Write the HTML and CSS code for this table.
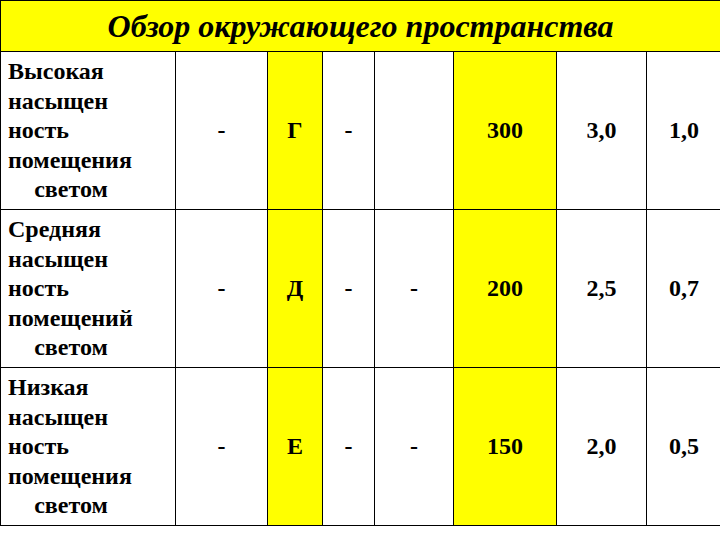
FILE: index.html
```html
<!DOCTYPE html>
<html lang="ru">
<head>
<meta charset="utf-8">
<link rel="stylesheet" href="styles.css">
</head>
<body>
<div class="sheet">
  <div class="title">Обзор окружающего пространства</div>
  <table class="grid">
    <colgroup>
      <col class="c0"><col class="c1"><col class="c2"><col class="c3"><col class="c4"><col class="c5"><col class="c6"><col class="c7">
    </colgroup>
    <tr>
      <td class="label"><div class="lines"><div>Высокая</div><div>насыщен</div><div>ность</div><div>помещения</div><div class="last">светом</div></div></td>
      <td>-</td><td class="y">Г</td><td>-</td><td></td><td class="y">300</td><td>3,0</td><td>1,0</td>
    </tr>
    <tr>
      <td class="label"><div class="lines"><div>Средняя</div><div>насыщен</div><div>ность</div><div>помещений</div><div class="last">светом</div></div></td>
      <td>-</td><td class="y">Д</td><td>-</td><td>-</td><td class="y">200</td><td>2,5</td><td>0,7</td>
    </tr>
    <tr>
      <td class="label"><div class="lines"><div>Низкая</div><div>насыщен</div><div>ность</div><div>помещения</div><div class="last">светом</div></div></td>
      <td>-</td><td class="y">Е</td><td>-</td><td>-</td><td class="y">150</td><td>2,0</td><td>0,5</td>
    </tr>
  </table>
</div>
</body>
</html>
```
FILE: styles.css
```css
html, body {
  margin: 0;
  padding: 0;
  background: #ffffff;
}
.sheet {
  width: 720px;
  color: #000;
  font-family: "Liberation Serif", "Times New Roman", serif;
}
.title {
  height: 50px;
  background: #ffff00;
  border-top: 1px solid #000;
  border-left: 1px solid #000;
  border-bottom: 1px solid #000;
  text-align: center;
  font-style: italic;
  font-weight: bold;
  font-size: 32px;
  line-height: 50px;
}
.grid {
  border-collapse: collapse;
  table-layout: fixed;
  width: 721px;
  margin-top: -1px;
  font-family: inherit;
}
.c0 { width: 175px; }
.c1 { width: 92px; }
.c2 { width: 55px; }
.c3 { width: 52px; }
.c4 { width: 79px; }
.c5 { width: 103px; }
.c6 { width: 90px; }
.c7 { width: 75px; }
.grid td {
  border: 1px solid #000;
  height: 156px;
  padding: 1px 0 0;
  text-align: center;
  vertical-align: middle;
  font-weight: bold;
  font-size: 24px;
  line-height: 29.4px;
}
.grid td.y {
  background: #ffff00;
}
.grid td.label {
  text-align: left;
  padding-left: 7px;
}
.lines {
  width: 126px;
}
.lines .last {
  text-align: center;
}
```
